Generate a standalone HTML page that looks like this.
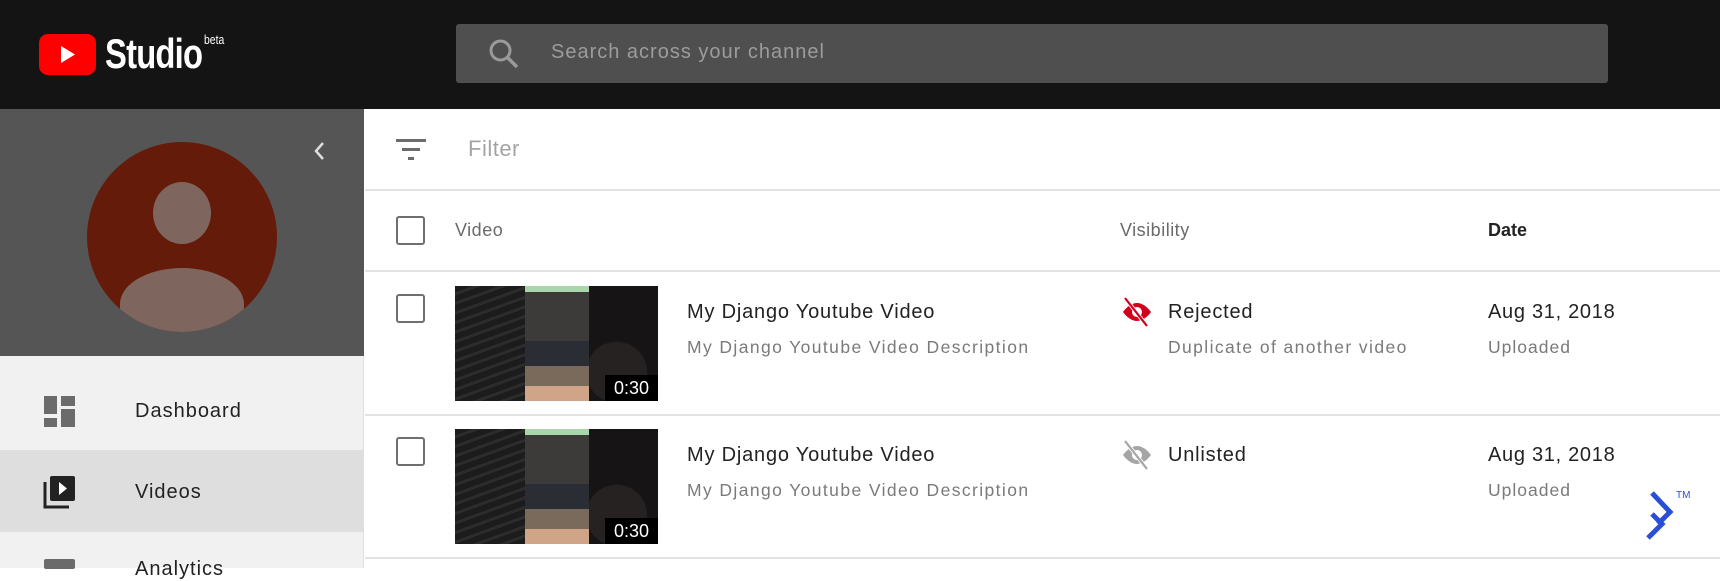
<!DOCTYPE html>
<html><head><meta charset="utf-8"><style>
*{box-sizing:border-box;margin:0;padding:0}
body{width:1720px;height:568px;overflow:hidden;background:#fff;font-family:"Liberation Sans",Roboto,sans-serif;position:relative}
.abs{position:absolute}
.hdr{left:0;top:0;width:1720px;height:109px;background:#141414}
.side{left:0;top:109px;width:364px;height:459px;background:#f1f1f1;border-right:1px solid #e0e0e0}
.prof{left:0;top:109px;width:364px;height:247px;background:#555}
.t{position:absolute;white-space:nowrap}
.cb{position:absolute;width:29px;height:29px;border:2.5px solid #6f6f6f;border-radius:3px}
.line{position:absolute;left:365px;width:1355px;height:2px;background:#e3e3e3}
.thumb{position:absolute;width:203px;height:115px;overflow:hidden;background:#111}
.thumb .a{position:absolute;left:0;top:0;width:70px;height:115px;background:repeating-linear-gradient(160deg,#1c1c1c 0 6px,#2c2c2c 6px 9px),#222}
.thumb .b{position:absolute;left:70px;top:0;width:64px;height:115px;background:linear-gradient(180deg,#a9d7ab 0 6px,#3d3a3a 6px 55px,#2a2d33 55px 80px,#7a6a5c 80px 100px,#d0a487 100px 115px)}
.thumb .c{position:absolute;left:134px;top:0;width:69px;height:115px;background:radial-gradient(circle at 40% 75%,#262222 0 30px,#161414 31px)}
.thumb .d{position:absolute;right:0;bottom:0;width:53px;height:26px;background:#000;color:#fff;font-size:18px;line-height:26px;text-align:center}
.title{font-size:20px;color:#222;letter-spacing:0.8px}
.sub{font-size:17.5px;color:#7a7a7a;letter-spacing:1.4px}
.dt{letter-spacing:0.7px}
</style></head><body>
<div class="abs hdr"></div>
<svg class="abs" style="left:39px;top:34px" width="57" height="41" viewBox="0 0 57 41"><rect width="57" height="41" rx="9" fill="#f00"/><path d="M22 12 L36 20.5 L22 29Z" fill="#fff"/></svg>
<div class="t" style="left:105px;top:30px;font-size:42px;font-weight:bold;color:#fff;transform:scaleX(.78);transform-origin:left;letter-spacing:-1px">Studio</div>
<div class="t" style="left:204px;top:32px;font-size:13px;color:#fff;transform:scaleX(.8);transform-origin:left">beta</div>
<div class="abs" style="left:456px;top:24px;width:1152px;height:59px;background:#4f4f4f;border-radius:3px"></div>
<svg class="abs" style="left:488px;top:38px" width="32" height="32" viewBox="0 0 32 32"><circle cx="12.5" cy="12.5" r="9.5" fill="none" stroke="#9a9a9a" stroke-width="3"/><path d="M19.5 19.5 L29 29" stroke="#9a9a9a" stroke-width="3.5"/></svg>
<div class="t" style="left:551px;top:41px;font-size:20px;color:#9c9c9c;letter-spacing:1px">Search across your channel</div>

<div class="abs side"></div>
<div class="abs prof"></div>
<div class="abs" style="left:87px;top:142px;width:190px;height:190px;border-radius:50%;background:#641b09;overflow:hidden">
 <div class="abs" style="left:66px;top:40px;width:58px;height:62px;border-radius:50%;background:#7e665e"></div>
 <div class="abs" style="left:33px;top:126px;width:124px;height:90px;border-radius:50% 50% 0 0/40% 40% 0 0;background:#7e665e"></div>
</div>
<svg class="abs" style="left:311px;top:140px" width="16" height="22" viewBox="0 0 16 22"><path d="M12 3 L5 11 L12 19" fill="none" stroke="#ddd" stroke-width="2.5"/></svg>

<svg class="abs" style="left:44px;top:396px" width="31" height="31" viewBox="0 0 31 31" fill="#6b6b6b"><rect x="0" y="0" width="13" height="18"/><rect x="17" y="0" width="14" height="10"/><rect x="0" y="22" width="13" height="9"/><rect x="17" y="13" width="14" height="18"/></svg>
<div class="t" style="left:135px;top:400px;font-size:20px;color:#222;letter-spacing:1px">Dashboard</div>
<div class="abs" style="left:0;top:450px;width:364px;height:82px;background:#dedede"></div>
<svg class="abs" style="left:43px;top:474px" width="34" height="36" viewBox="0 0 34 36"><path d="M2 8 V33 H26" fill="none" stroke="#222" stroke-width="3"/><rect x="7" y="2" width="25" height="25" rx="2" fill="#222"/><path d="M16 8 L24 14.5 L16 21Z" fill="#fff"/></svg>
<div class="t" style="left:135px;top:481px;font-size:20px;color:#222;letter-spacing:1px">Videos</div>
<div class="abs" style="left:44px;top:559px;width:31px;height:10px;background:#6b6b6b;border-radius:2px"></div>
<div class="t" style="left:135px;top:558px;font-size:20px;color:#222;letter-spacing:1px">Analytics</div>

<svg class="abs" style="left:396px;top:139px" width="30" height="22" viewBox="0 0 30 22" fill="#6b6b6b"><rect x="0" y="0" width="30" height="3"/><rect x="6" y="9" width="18" height="3"/><rect x="12" y="18" width="6" height="3"/></svg>
<div class="t" style="left:468px;top:136px;font-size:22px;color:#a4a4a4;letter-spacing:0.5px">Filter</div>
<div class="line" style="top:189px"></div>
<div class="cb" style="left:396px;top:216px"></div>
<div class="t" style="left:455px;top:220px;font-size:18px;color:#6a6a6a;letter-spacing:0.5px">Video</div>
<div class="t" style="left:1120px;top:220px;font-size:18px;color:#6a6a6a;letter-spacing:0.5px">Visibility</div>
<div class="t" style="left:1488px;top:220px;font-size:18px;color:#222;font-weight:bold">Date</div>
<div class="line" style="top:270px"></div>

<div class="cb" style="left:396px;top:294px"></div>
<div class="thumb" style="left:455px;top:286px"><div class="a"></div><div class="b"></div><div class="c"></div><div class="d">0:30</div></div>
<div class="t title" style="left:687px;top:301px">My Django Youtube Video</div>
<div class="t sub" style="left:687px;top:337px">My Django Youtube Video Description</div>
<svg class="abs" style="left:1120px;top:297px" width="34" height="30" viewBox="0 0 34 30"><path d="M17 6 C9 6 3 15 3 15 C3 15 9 24 17 24 C25 24 31 15 31 15 C31 15 25 6 17 6Z" fill="#d0021b"/><circle cx="17" cy="15" r="5" fill="#fff"/><path d="M5 1 L27 29" stroke="#fff" stroke-width="4"/><path d="M5 1 L27 29" stroke="#d0021b" stroke-width="2.2"/></svg>
<div class="t title" style="left:1168px;top:301px">Rejected</div>
<div class="t sub" style="left:1168px;top:337px">Duplicate of another video</div>
<div class="t title dt" style="left:1488px;top:301px">Aug 31, 2018</div>
<div class="t sub" style="left:1488px;top:337px;letter-spacing:1px">Uploaded</div>
<div class="line" style="top:414px"></div>

<div class="cb" style="left:396px;top:437px"></div>
<div class="thumb" style="left:455px;top:429px"><div class="a"></div><div class="b"></div><div class="c"></div><div class="d">0:30</div></div>
<div class="t title" style="left:687px;top:444px">My Django Youtube Video</div>
<div class="t sub" style="left:687px;top:480px">My Django Youtube Video Description</div>
<svg class="abs" style="left:1120px;top:440px" width="34" height="30" viewBox="0 0 34 30"><path d="M17 6 C9 6 3 15 3 15 C3 15 9 24 17 24 C25 24 31 15 31 15 C31 15 25 6 17 6Z" fill="#a5a5a5"/><circle cx="17" cy="15" r="5" fill="#fff"/><path d="M5 1 L27 29" stroke="#fff" stroke-width="4"/><path d="M5 1 L27 29" stroke="#a5a5a5" stroke-width="2.2"/></svg>
<div class="t title" style="left:1168px;top:444px">Unlisted</div>
<div class="t title dt" style="left:1488px;top:444px">Aug 31, 2018</div>
<div class="t sub" style="left:1488px;top:480px;letter-spacing:1px">Uploaded</div>
<div class="line" style="top:557px"></div>

<svg class="abs" style="left:1644px;top:490px" width="34" height="50" viewBox="0 0 34 50"><path d="M8 3 L26 22 L14 34 M8 24 L18 34 L4 48" fill="none" stroke="#2a4fd6" stroke-width="5" stroke-linejoin="miter"/></svg>
<div class="t" style="left:1676px;top:490px;font-size:10px;color:#2a4fd6">TM</div>
</body></html>
